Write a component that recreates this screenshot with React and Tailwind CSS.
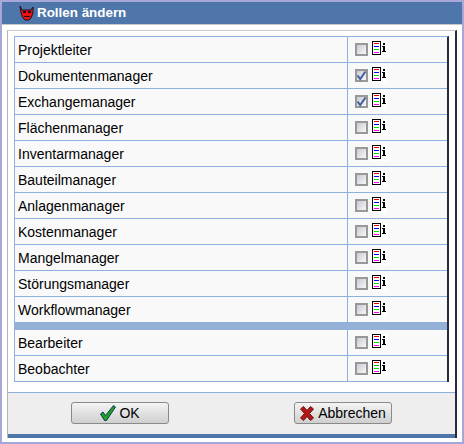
import React from 'react';

const managers = ['Projektleiter', 'Dokumentenmanager', 'Exchangemanager', 'Flächenmanager', 'Inventarmanager', 'Bauteilmanager', 'Anlagenmanager', 'Kostenmanager', 'Mangelmanager', 'Störungsmanager', 'Workflowmanager'];
const checked = ['Dokumentenmanager', 'Exchangemanager'];

const InfoIcon = ({ lines }) => (
  <svg width="16" height="16" viewBox="0 0 16 16" className="shrink-0 bg-white">
    <rect x="1.5" y="0.5" width="8" height="13" fill="white" stroke="black" />
    {lines.map((color, i) => (
      <rect key={i} x="3" y={2 + i * 3} width="5" height="1" fill={color} />
    ))}
    <rect x="12" y="2" width="2" height="2" fill="black" />
    <path d="M11 5h3v5h1v1h-4v-1h1v-4h-1z" fill="black" />
  </svg>
);

const Checkbox = ({ on }) => (
  <div className="w-[13px] h-[13px] border-2 border-[#989898] bg-gradient-to-br from-[#c8ccd4] to-[#f7f7f7] flex items-center justify-center overflow-visible">
    {on && (
      <svg width="11" height="11" viewBox="0 0 11 11" className="shrink-0">
        <path d="M1.5 5.5 L4.2 9 L9.5 1.5" fill="none" stroke="#3f5f9f" strokeWidth="2" />
      </svg>
    )}
  </div>
);

const Row = ({ name, lines }) => (
  <div className="flex h-[26px] border-b border-[#8fb0dc] bg-[#f9f9f9]">
    <div className="w-[333px] pl-[3px] pt-[1px] border-r border-[#8fb0dc] text-[14px] leading-[25px] text-black">{name}</div>
    <div className="flex-1 flex items-start pl-[7px] pt-[4px] gap-[3px]">
      <div className="mt-[2px]"><Checkbox on={checked.includes(name)} /></div>
      <InfoIcon lines={lines} />
    </div>
  </div>
);

const Button = ({ icon, gap, children }) => (
  <button className={`w-[98px] h-[22px] rounded-[3px] border border-[#8a8a8a] bg-gradient-to-b from-[#f4f4f4] to-[#cfcfcf] flex items-center justify-center text-[14px] text-black ${gap}`}>
    {icon}
    {children}
  </button>
);

const App = () => {
  const colors = ['#e00000', '#0000ff', '#00e000', '#ff00ff'];
  const staff = ['#e00000', '#00c000', '#00e000', '#ff00ff'];
  return (
    <div className="w-[464px] h-[444px] border-2 border-[#a8a8d8] bg-white flex flex-col font-['Liberation_Sans',sans-serif]">
      <div className="h-[23px] border-b border-[#c8c8c4] bg-[#4f76ab] flex items-center pl-[17px] gap-[2px] text-white font-bold text-[13.4px]">
        <svg width="16" height="16" viewBox="0 0 16 16">
          <path d="M1 1l2 4h9l2-3v6l-2 5-2 2H6l-2-2-2-5z" fill="#ee1111" stroke="#201020" />
          <rect x="4" y="6" width="3" height="2" fill="#201020" />
          <rect x="9" y="6" width="3" height="2" fill="#201020" />
          <rect x="5" y="11" width="6" height="1" fill="#201020" />
        </svg>
        <span>Rollen ändern</span>
      </div>
      <div className="flex-1 pt-[5px] pl-[5px] pr-[5px] flex flex-col">
        <div className="h-[408px] border-l border-t border-r-2 border-l-[#b4b4b4] border-t-[#c8c8c8] border-r-[#2a2a3c] flex flex-col">
          <div className="pl-[6px] pt-[5px] pr-[6px] h-[361px]">
            <div className="border-l border-t border-r-2 border-l-[#8fb0dc] border-t-[#8fb0dc] border-r-[#2a2a3c]">
              {managers.map((m) => (
                <Row key={m} name={m} lines={colors} />
              ))}
              <div className="h-[7px] bg-[#96b1d8]" />
              <Row name="Bearbeiter" lines={colors} />
              <Row name="Beobachter" lines={staff} />
            </div>
          </div>
          <div className="flex-1 border-t border-[#8fb0dc] bg-[#eeeeee] flex justify-between items-start pt-[9px] pl-[63px] pr-[63px]">
            <Button gap="gap-[3px]" icon={
              <svg width="16" height="16" viewBox="0 0 16 16">
                <path d="M0.5 9l2.5-2 2.5 3.5L13.5 0.5l2 1.5L6.5 15.5h-2z" fill="#1fa01f" stroke="#0b3d5c" />
              </svg>
            }>OK</Button>
            <Button gap="gap-[4px]" icon={
              <svg width="14" height="15" viewBox="0 0 14 15">
                <path d="M0.5 3l3-2.5 3.5 4 3.5-4 3 2.5-4 4.5 4 4.5-3 2.5-3.5-4-3.5 4-3-2.5 4-4.5z" fill="#b01818" stroke="#7a1010" />
              </svg>
            }>Abbrechen</Button>
          </div>
          <div className="h-[4px] bg-[#4f76ab]" />
        </div>
      </div>
    </div>
  );
};

export default App;
